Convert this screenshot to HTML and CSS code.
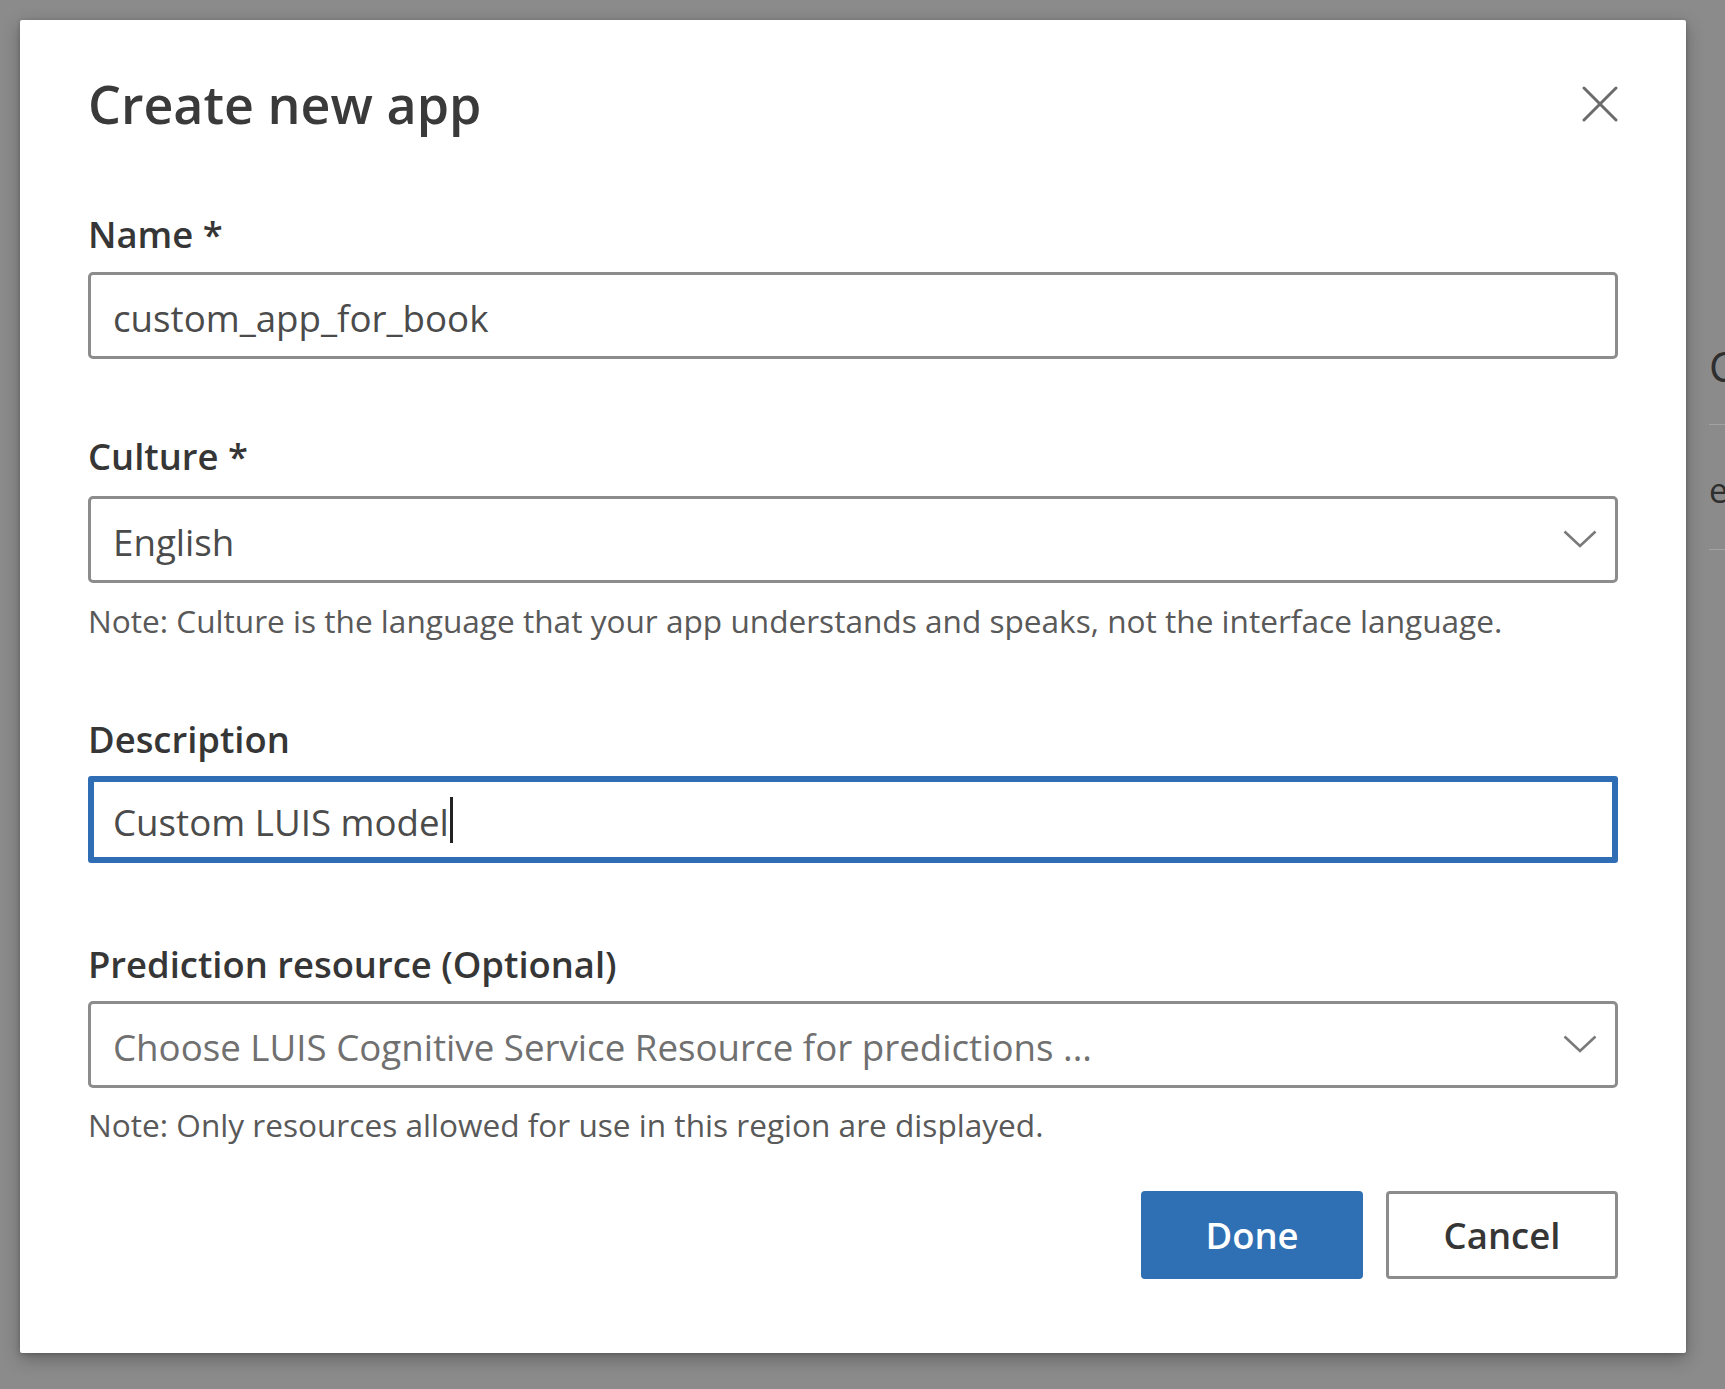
FILE: index.html
```html
<!DOCTYPE html>
<html lang="en">
<head>
<meta charset="utf-8">
<title>Create new app</title>
<link rel="stylesheet" href="styles.css">
</head>
<body>
<div class="page">
  <div class="page-list">
    <div class="page-row page-row-head">C</div>
    <div class="page-row page-row-item">e</div>
  </div>
</div>

<div class="dialog" role="dialog" aria-labelledby="dlg-title">
  <div class="dialog-header">
    <h1 class="dialog-title" id="dlg-title">Create new app</h1>
    <button class="close-btn" aria-label="Close">
      <svg width="36" height="36" viewBox="0 0 36 36"><path d="M2 2 L34 34 M34 2 L2 34" stroke="#6b6b6b" stroke-width="3" fill="none" stroke-linecap="round"/></svg>
    </button>
  </div>

  <div class="field field-name">
    <div class="field-label">Name *</div>
    <div class="textbox"><span class="value">custom_app_for_book</span></div>
  </div>

  <div class="field field-culture">
    <div class="field-label">Culture *</div>
    <div class="textbox dropdown"><span class="value">English</span>
      <svg class="chevron" width="34" height="18" viewBox="0 0 34 18"><polyline points="1.5,1.5 17,16 32.5,1.5" stroke="#7a7a7a" stroke-width="2.6" fill="none"/></svg>
    </div>
    <div class="note note-culture">Note: Culture is the language that your app understands and speaks, not the interface language.</div>
  </div>

  <div class="field field-desc">
    <div class="field-label">Description</div>
    <div class="textbox focused"><span class="value">Custom LUIS model</span><span class="caret"></span></div>
  </div>

  <div class="field field-pred">
    <div class="field-label">Prediction resource (Optional)</div>
    <div class="textbox dropdown"><span class="value placeholder">Choose LUIS Cognitive Service Resource for predictions ...</span>
      <svg class="chevron" width="34" height="18" viewBox="0 0 34 18"><polyline points="1.5,1.5 17,16 32.5,1.5" stroke="#7a7a7a" stroke-width="2.6" fill="none"/></svg>
    </div>
    <div class="note note-pred">Note: Only resources allowed for use in this region are displayed.</div>
  </div>

  <div class="actions">
    <button class="btn btn-primary">Done</button>
    <button class="btn btn-default">Cancel</button>
  </div>
</div>
</body>
</html>
```

FILE: styles.css
```css
html, body {
  margin: 0;
  padding: 0;
}
body {
  width: 1725px;
  height: 1389px;
  overflow: hidden;
  background: #8b8b8b;
  font-family: "Open Sans", "Noto Sans", sans-serif;
  position: relative;
}

/* page behind the modal (dimmed) */
.page {
  height: 100%;
  padding-left: 1709px;
  padding-top: 300px;
  box-sizing: border-box;
  overflow: hidden;
}
.page-list {
  width: 200px;
}
.page-row {
  height: 125px;
  border-bottom: 1px solid #a3a3a3;
  display: flex;
  align-items: center;
  color: #2e2e2e;
  white-space: nowrap;
  box-sizing: border-box;
}
.page-row-head {
  font-size: 42px;
  padding-top: 6px;
}
.page-row-item {
  font-size: 34px;
  padding-top: 6px;
}

/* dialog */
.dialog {
  position: absolute;
  left: 20px;
  top: 20px;
  width: 1666px;
  height: 1333px;
  box-sizing: border-box;
  padding: 52px 68px 0 68px;
  background: #ffffff;
  border-radius: 2px;
  box-shadow: 0 6px 18px rgba(0, 0, 0, 0.28), 0 1px 4px rgba(0, 0, 0, 0.2);
}
.dialog-header {
  height: 64px;
  display: flex;
  align-items: center;
  justify-content: space-between;
}
.dialog-title {
  margin: 0;
  font-size: 52px;
  line-height: 64px;
  font-weight: 600;
  color: #3a3a3a;
}
.close-btn {
  width: 38px;
  height: 38px;
  padding: 1px;
  margin: 0 -1px 0 0;
  border: none;
  background: transparent;
  display: flex;
  align-items: center;
  justify-content: center;
}

.field-label {
  font-size: 36.4px;
  line-height: 44px;
  font-weight: 600;
  color: #363636;
}
.field-name { margin-top: 76px; }
.field-culture { margin-top: 75px; }
.field-desc { margin-top: 76px; }
.field-pred { margin-top: 79px; }

.textbox {
  margin-top: 16px;
  height: 87px;
  box-sizing: border-box;
  border: 3px solid #8c8c8c;
  border-radius: 5px;
  display: flex;
  align-items: center;
  padding: 4px 18px 0 22px;
  font-size: 36.7px;
  line-height: 44px;
  color: #4b4b4b;
}
.field-culture .textbox { margin-top: 18px; }
.field-desc .textbox,
.field-pred .textbox { margin-top: 15px; }

.textbox.focused {
  border: 6px solid #2f6eb4;
  border-radius: 3px;
  padding-left: 19px;
}
.caret {
  display: inline-block;
  width: 3px;
  height: 46px;
  background: #222;
  margin-left: 1px;
  margin-top: -4px;
}
.dropdown .chevron {
  margin-left: auto;
  flex: none;
  margin-top: -6px;
}
.placeholder {
  color: #707070;
}

.note {
  font-size: 31.6px;
  line-height: 40px;
  color: #595959;
}
.note-culture { margin-top: 18px; }
.note-pred { margin-top: 17px; }

.actions {
  margin-top: 46px;
  display: flex;
  justify-content: flex-end;
  gap: 23px;
}
.btn {
  height: 88px;
  box-sizing: border-box;
  border-radius: 4px;
  font-family: "Open Sans", "Noto Sans", sans-serif;
  font-size: 36.5px;
  font-weight: 600;
  padding: 0;
}
.btn-primary {
  width: 222px;
  background: #2f6fb3;
  border: none;
  color: #ffffff;
}
.btn-default {
  width: 232px;
  background: #ffffff;
  border: 3px solid #8c8c8c;
  color: #363636;
}
```
